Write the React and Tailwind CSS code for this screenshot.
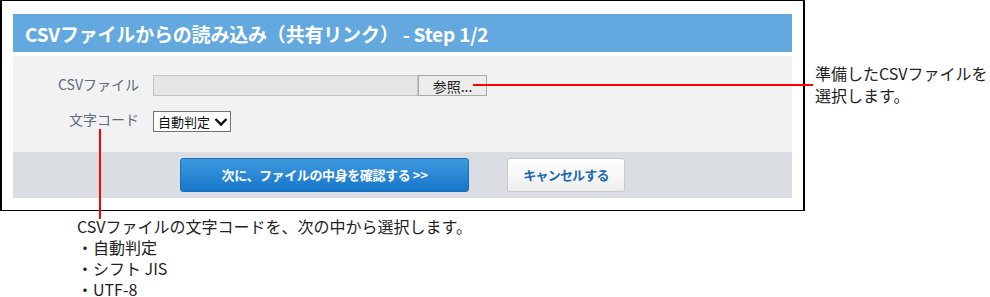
import React from "react";

const jp = { fontFamily: '"Noto Sans CJK JP", "Noto Sans", sans-serif' };

export default function App() {
  return (
    <div className="relative w-[990px] h-[297px] bg-white overflow-hidden" style={jp}>
      {/* dialog frame */}
      <div className="w-[805px] h-[211px] border border-l-2 border-r-2 border-black pt-[13px] px-[11px]">
        <div className="h-[38px] bg-[#63a8de] flex items-center pl-[12px]">
          <span className="text-white font-bold text-[19px] leading-none tracking-[-0.01em]">
            CSVファイルからの読み込み（共有リンク） - Step 1/2
          </span>
        </div>

        <div className="mt-[4px] h-[96px] bg-[#f2f2f2] pt-[19px]">
          <div className="flex items-center">
            <div className="w-[127px] pr-[1px] text-right text-[14px] leading-none text-[#5b6b7e] -mt-[3px]">CSVファイル</div>
            <div className="ml-[13px] flex h-[21px]">
              <div className="w-[265px] bg-[#e5e5e5] border border-[#c4c4c4]"></div>
              <div className="w-[69px] bg-[#ececec] border border-[#a9a9a9] flex items-center justify-center text-[14px] leading-none text-[#222]">
                参照...
              </div>
            </div>
          </div>
          <div className="flex items-center mt-[15px]">
            <div className="w-[127px] pr-[1px] text-right text-[14px] leading-none text-[#5b6b7e] -mt-[6px]">文字コード</div>
            <div className="ml-[13px] relative w-[78px] h-[21px] bg-white border border-[#707070] flex items-center pl-[4px]">
              <span className="text-[13px] text-[#111] leading-none">自動判定</span>
              <svg className="absolute right-[2px] top-[5px]" width="14" height="10" viewBox="0 0 14 10">
                <path d="M1.5 2 L7 7.5 L12.5 2" fill="none" stroke="#111" strokeWidth="2.4" />
              </svg>
            </div>
          </div>
        </div>

        <div className="h-[46px] bg-[#dadde1] flex items-center justify-center gap-[38px]">
          <button className="w-[289px] h-[34px] rounded-[3px] border border-[#1e6fb6] bg-gradient-to-b from-[#3c98dd] to-[#1877cb] text-white font-bold text-[13px] tracking-[-0.03em]">
            次に、ファイルの中身を確認する &gt;&gt;
          </button>
          <button className="w-[118px] h-[34px] rounded-[3px] border border-[#c5c8cc] bg-gradient-to-b from-white to-[#eeeeee] text-[#1c68b0] font-bold text-[13px] tracking-[-0.06em]">
            キャンセルする
          </button>
        </div>
      </div>

      {/* callout lines */}
      <div className="absolute left-[473px] top-[84px] w-[340px] h-[2px] bg-[#ff0000]"></div>
      <div className="absolute left-[99px] top-[129px] w-[2px] h-[90px] bg-[#ff0000]"></div>

      {/* callout notes */}
      <div className="absolute left-[815px] top-[62px] text-[16px] leading-[22px] text-[#222]">
        <div>準備したCSVファイルを</div>
        <div>選択します。</div>
      </div>
      <div className="absolute left-[77px] top-[216px] text-[16px] leading-[21px] text-[#222]">
        <div className="h-[21px]">CSVファイルの文字コードを、次の中から選択します。</div>
        <div className="h-[21px]">・自動判定</div>
        <div className="h-[21px]">・シフト JIS</div>
        <div className="h-[21px]">・UTF-8</div>
      </div>
    </div>
  );
}
